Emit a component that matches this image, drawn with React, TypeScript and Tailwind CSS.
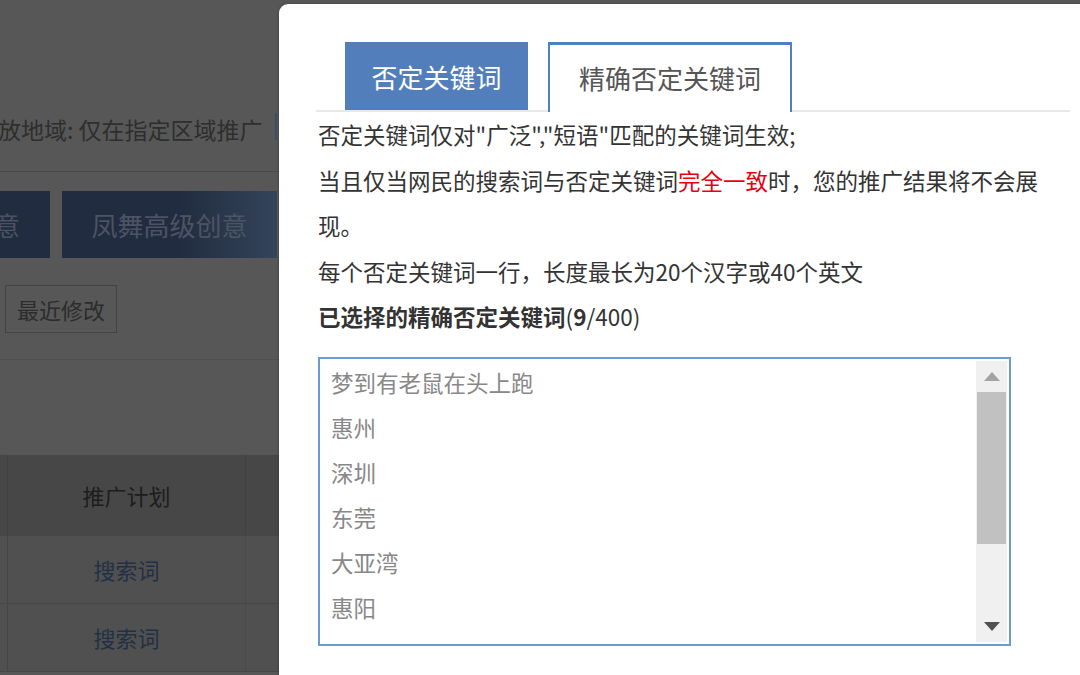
import React from "react";

const cjk = "font-['Noto_Sans_CJK_SC','Noto_Sans',sans-serif]";

function Background() {
  return (
    <div className="w-[279px] h-full overflow-hidden flex flex-col">
      <div className="h-[115px]" />
      <div className="flex items-center h-[28px] relative">
        <span className="ml-[-2px] text-[23px] leading-[28px] text-[#2e2e2e] whitespace-nowrap">
          放地域: 仅在指定区域推广
        </span>
        <div className="absolute left-[275px] top-[-2px] w-[2px] h-[27px] bg-[#34506e]" />
      </div>
      <div className="h-[28px]" />
      <div className="h-px bg-[#4a4a4a]" />
      <div className="h-[19px]" />
      <div className="flex h-[67px] gap-[12px]">
        <div className="w-[180px] ml-[-130px] shrink-0 bg-[#212c40] text-[#4a5262] text-[26px] flex items-center justify-end pr-[30px] whitespace-nowrap">
          普通创意
        </div>
        <div className="w-[215px] shrink-0 bg-[linear-gradient(to_right,#212c40_55%,#34445a)] text-[#4c5464] text-[26px] flex items-center justify-center whitespace-nowrap">
          凤舞高级创意
        </div>
      </div>
      <div className="h-[27px]" />
      <div className="ml-[5px] w-[112px] h-[48px] border border-[#434343] text-[#2c2c2c] text-[22px] flex items-center justify-center">
        最近修改
      </div>
      <div className="h-[26px]" />
      <div className="h-px bg-[#4f4f4f]" />
      <div className="h-[95px]" />
      <div className="flex flex-col">
        <div className="flex h-[80px] bg-[#474747]">
          <div className="w-[8px] border-r border-[#404040]" />
          <div className="w-[238px] border-r border-[#404040] flex items-center justify-center text-[22px] text-[#1d1d1d]">
            推广计划
          </div>
          <div className="flex-1" />
        </div>
        {[0, 1].map((i) => (
          <div key={i} className="flex h-[68px] bg-[#505050] border-t border-[#464646]">
            <div className="w-[8px] border-r border-[#454545]" />
            <div className="w-[238px] border-r border-[#4a4a4a] flex items-center justify-center text-[22px] text-[#223046]">
              搜索词
            </div>
            <div className="flex-1" />
          </div>
        ))}
        <div className="h-px bg-[#464646]" />
      </div>
    </div>
  );
}

function Scrollbar() {
  return (
    <div className="w-[31px] shrink-0 bg-[#f0f0f0] flex flex-col">
      <div className="h-[31px] flex items-center justify-center">
        <svg width="16" height="9" viewBox="0 0 16 9">
          <polygon points="8,0 16,9 0,9" fill="#a3a3a3" />
        </svg>
      </div>
      <div className="h-[152px] mx-px bg-[#c1c1c1]" />
      <div className="flex-1" />
      <div className="h-[31px] flex items-center justify-center">
        <svg width="16" height="9" viewBox="0 0 16 9">
          <polygon points="0,0 16,0 8,9" fill="#505050" />
        </svg>
      </div>
    </div>
  );
}

export default function App() {
  const items = ["梦到有老鼠在头上跑", "惠州", "深圳", "东莞", "大亚湾", "惠阳"];
  return (
    <div className={`relative w-[1080px] h-[675px] overflow-hidden bg-[#575757] ${cjk}`}>
      <Background />
      <div className="absolute left-[279px] top-[4px] right-[-20px] bottom-[-20px] bg-white rounded-tl-[9px] pl-[37px] pt-[38px] shadow-[0_0_3px_rgba(0,0,0,0.3)]">
        <div className="w-[754px] flex flex-col">
          <div className="flex border-b-2 border-[#e8e8e8] pl-[29px] gap-[20px]">
            <div className="w-[183px] h-[68px] bg-[#527fbc] text-white text-[26px] flex items-center justify-center">
              否定关键词
            </div>
            <div className="w-[244px] h-[70px] mb-[-2px] bg-white border-t-[3px] border-x-2 border-[#4f7fc0] text-[#555] text-[26px] flex items-center justify-center pb-[3px]">
              精确否定关键词
            </div>
          </div>
          <div className="pl-[2px] w-[742px] text-[22.5px] leading-[45.5px] text-[#333]">
            <p>否定关键词仅对"广泛","短语"匹配的关键词生效;</p>
            <p>
              当且仅当网民的搜索词与否定关键词<span className="text-[#e60012]">完全一致</span>
              时，您的推广结果将不会展现。
            </p>
            <p>每个否定关键词一行，长度最长为20个汉字或40个英文</p>
            <p>
              <span className="font-bold">已选择的精确否定关键词</span>(<span className="font-bold">9</span>/400)
            </p>
          </div>
          <div className="ml-[2px] mt-[17px] w-[693px] h-[289px] border-2 border-[#6b9bd1] p-[2px] flex">
            <div className="flex-1 mt-[-1px] overflow-hidden">
              {items.map((t) => (
                <div key={t} className="pl-[9px] text-[22.5px] leading-[45px] text-[#888]">
                  {t}
                </div>
              ))}
            </div>
            <Scrollbar />
          </div>
        </div>
      </div>
    </div>
  );
}
